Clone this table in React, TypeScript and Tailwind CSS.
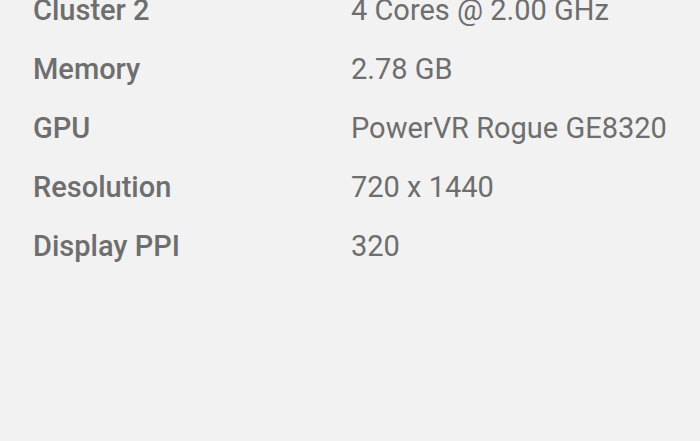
import React from "react";

const rows: [string, string][] = [
  ["Cluster 2", "4 Cores @ 2.00 GHz"],
  ["Memory", "2.78 GB"],
  ["GPU", "PowerVR Rogue GE8320"],
  ["Resolution", "720 x 1440"],
  ["Display PPI", "320"],
];

const App = () => {
  return (
    <div className="w-[700px] h-[441px] overflow-hidden bg-[#f2f2f2] font-['Roboto',sans-serif] text-[#6e6e6e]">
      <div className="flex flex-col mt-[-19px] pl-[33px]">
        {rows.map(([label, value]) => (
          <div key={label} className="flex h-[59px] items-center text-[29px] leading-[59px]">
            <div className="w-[318px] font-medium">{label}</div>
            <div>{value}</div>
          </div>
        ))}
      </div>
    </div>
  );
};

export default App;
